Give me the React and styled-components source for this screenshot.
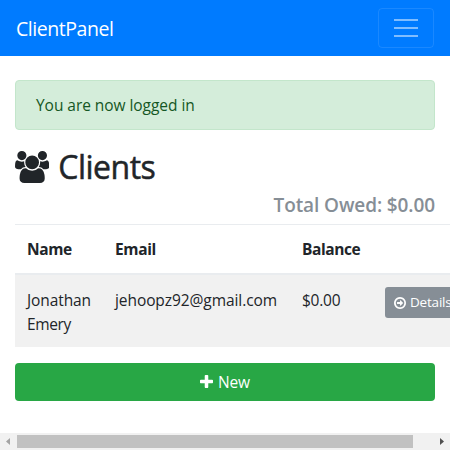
import React from "react";
import styled, { createGlobalStyle } from "styled-components";

const GlobalStyle = createGlobalStyle`
  *, *::before, *::after { box-sizing: border-box; }
  html, body { margin: 0; height: 100%; overflow: hidden; background: #fff; }
  body {
    font-family: "Open Sans", "Noto Sans", sans-serif;
    font-size: 15.5px;
    line-height: 24px;
    color: #212529;
  }
`;

const Page = styled.div`
  display: flex;
  flex-direction: column;
  width: 100%;
  height: 100vh;
  overflow: hidden;
`;

const Navbar = styled.nav`
  display: flex;
  align-items: center;
  justify-content: space-between;
  height: 56px;
  flex: none;
  padding: 0 16px;
  background: #007bff;
`;

const Text = styled.span`
  letter-spacing: ${(p) => p.$track || 0}px;
  white-space: nowrap;
`;

const Brand = styled.a`
  color: #fff;
  font-size: 19.5px;
  line-height: 30px;
  padding-top: 1px;
`;

const Toggler = styled.button`
  display: flex;
  align-items: center;
  justify-content: center;
  width: 56px;
  height: 40px;
  padding: 0;
  background: transparent;
  border: 1px solid rgba(255, 255, 255, 0.1);
  border-radius: 4px;
`;

const Bars = styled.span`
  display: flex;
  flex-direction: column;
  gap: 6px;
  width: 24px;
`;

const Bar = styled.span`
  height: 2px;
  background: rgba(255, 255, 255, 0.5);
`;

const Main = styled.main`
  flex: 1;
  min-height: 0;
  padding: 24px 15px 0;
`;

const Alert = styled.div`
  height: 50px;
  padding: 12px 20px;
  margin-bottom: 16px;
  color: #155724;
  background: #d4edda;
  border: 1px solid #c3e6cb;
  border-radius: 4px;
`;

const Heading = styled.h2`
  display: flex;
  align-items: center;
  gap: 9px;
  height: 38px;
  margin: 0 0 8px;
  padding-top: 3px;
  font-size: 32px;
  font-weight: 500;
  line-height: 38px;
  -webkit-text-stroke: 0.5px currentColor;
`;

const Total = styled.h5`
  height: 24px;
  margin: 0 0 8px;
  padding-top: 1px;
  font-size: 19px;
  font-weight: 600;
  line-height: 24px;
  text-align: right;
  color: #868e96;
`;

const Table = styled.div`
  width: 488px;
  margin-bottom: 16px;
  border-top: 1px solid #e9ecef;
`;

const Row = styled.div`
  display: grid;
  grid-template-columns: 88px 187px 83px 130px;
  height: ${(p) => (p.$head ? 50 : 72)}px;
  font-weight: ${(p) => (p.$head ? 700 : 400)};
  background: ${(p) => (p.$head ? "#fff" : "#f1f1f1")};
  border-bottom: ${(p) => (p.$head ? "2px solid #e9ecef" : "0")};
`;

const Cell = styled.div`
  padding: ${(p) => (p.$body ? 13 : 12)}px 12px 0;
`;

const DetailsButton = styled.a`
  display: inline-flex;
  align-items: center;
  gap: 4px;
  height: 31px;
  padding: 0 9px;
  color: #fff;
  background: #868e96;
  border-radius: 3px;
  font-size: 13.5px;
  line-height: 31px;
`;

const NewButton = styled.a`
  display: flex;
  align-items: center;
  justify-content: center;
  gap: 5px;
  height: 38px;
  color: #fff;
  background: #28a745;
  border-radius: 4px;
`;

const Scrollbar = styled.div`
  display: flex;
  align-items: center;
  height: 17px;
  flex: none;
  background: #f1f1f1;
`;

const ScrollArrow = styled.svg`
  display: block;
  width: 17px;
  height: 17px;
  fill: ${(p) => p.$color};
`;

const Track = styled.div`
  flex: 1;
`;

const Thumb = styled.div`
  width: 396px;
  height: 13px;
  background: #c1c1c1;
`;

const Icon = styled.svg`
  display: block;
  flex: none;
  fill: currentColor;
  stroke: none;
`;

const UsersIcon = () => (
  <Icon width="34.3" height="32" viewBox="0 0 1920 1792">
    <path d="M593 896q-162 5-265 128h-134q-82 0-138-40.5t-56-118.5q0-353 124-353 6 0 43.5 21t97.5 42.5 119 21.5q67 0 133-23-5 37-5 66 0 139 81 256zm1071 637q0 120-73 189.5t-194 69.5h-874q-121 0-194-69.5t-73-189.5q0-53 3.5-103.5t14-109 26.5-108.5 43-97.5 62-81 85.5-53.5 111.5-20q10 0 43 21.5t73 48 107 48 135 21.5 135-21.5 107-48 73-48 43-21.5q61 0 111.5 20t85.5 53.5 62 81 43 97.5 26.5 108.5 14 109 3.5 103.5zm-1024-1277q0 106-75 181t-181 75-181-75-75-181 75-181 181-75 181 75 75 181zm704 384q0 159-112.5 271.5t-271.5 112.5-271.5-112.5-112.5-271.5 112.5-271.5 271.5-112.5 271.5 112.5 112.5 271.5zm576 225q0 78-56 118.5t-138 40.5h-134q-103-123-265-128 81-117 81-256 0-29-5-66 66 23 133 23 59 0 119-21.5t97.5-42.5 43.5-21q124 0 124 353zm-128-609q0 106-75 181t-181 75-181-75-75-181 75-181 181-75 181 75 75 181z" />
  </Icon>
);

const ArrowIcon = () => (
  <Icon width="12" height="12" viewBox="128 128 1536 1536">
    <path d="M1285 896q0 14-9 23l-320 320q-9 9-23 9-13 0-22.5-9.5t-9.5-22.5v-192h-352q-13 0-22.5-9.5t-9.5-22.5v-192q0-13 9.5-22.5t22.5-9.5h352v-192q0-14 9-23t23-9q12 0 24 10l319 319q9 9 9 23zm160 0q0-148-73-273t-198-198-273-73-273 73-198 198-73 273 73 273 198 198 273 73 273-73 198-198 73-273zm219 0q0 209-103 385.5t-279.5 279.5-385.5 103-385.5-103-279.5-279.5-103-385.5 103-385.5 279.5-279.5 385.5-103 385.5 103 279.5 279.5 103 385.5z" />
  </Icon>
);

const PlusIcon = () => (
  <Icon width="13" height="14" viewBox="192 128 1408 1516">
    <path d="M1600 736v192q0 40-28 68t-68 28h-416v416q0 40-28 68t-68 28h-192q-40 0-68-28t-28-68v-416h-416q-40 0-68-28t-28-68v-192q0-40 28-68t68-28h416v-416q0-40 28-68t68-28h192q40 0 68 28t28 68v416h416q40 0 68 28t28 68z" />
  </Icon>
);

export default function App() {
  return (
    <Page>
      <GlobalStyle />
      <Navbar>
        <Brand><Text $track={-0.45}>ClientPanel</Text></Brand>
        <Toggler aria-label="Toggle navigation">
          <Bars><Bar /><Bar /><Bar /></Bars>
        </Toggler>
      </Navbar>
      <Main>
        <Alert><Text $track={-0.05}>You are now logged in</Text></Alert>
        <Heading><UsersIcon /><Text $track={-0.5}>Clients</Text></Heading>
        <Total><Text $track={-0.1}>Total Owed: $0.00</Text></Total>
        <Table>
          <Row $head>
            <Cell><Text $track={-0.4}>Name</Text></Cell>
            <Cell><Text $track={-0.35}>Email</Text></Cell>
            <Cell><Text $track={-0.4}>Balance</Text></Cell>
            <Cell />
          </Row>
          <Row>
            <Cell $body><Text $track={-0.1}>Jonathan</Text><br /><Text $track={-0.4}>Emery</Text></Cell>
            <Cell $body><Text $track={-0.08}>jehoopz92@gmail.com</Text></Cell>
            <Cell $body><Text $track={-0.25}>$0.00</Text></Cell>
            <Cell><DetailsButton><ArrowIcon /><Text $track={-0.2}>Details</Text></DetailsButton></Cell>
          </Row>
        </Table>
        <NewButton><PlusIcon /><Text $track={-0.2}>New</Text></NewButton>
      </Main>
      <Scrollbar>
        <ScrollArrow $color="#a3a3a3" viewBox="0 0 17 17"><path d="M10 5v7L6 8.5z" /></ScrollArrow>
        <Track><Thumb /></Track>
        <ScrollArrow $color="#505050" viewBox="0 0 17 17"><path d="M7 5v7l4-3.5z" /></ScrollArrow>
      </Scrollbar>
    </Page>
  );
}
